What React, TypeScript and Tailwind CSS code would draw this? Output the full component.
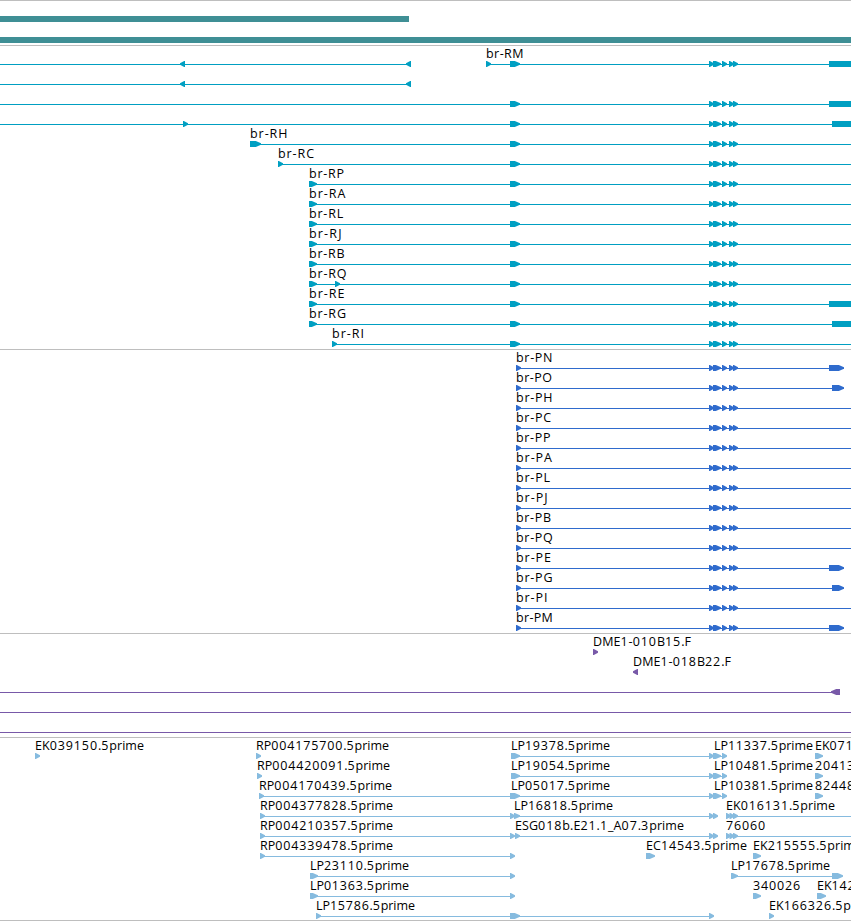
import { Fragment } from "react";

type Glyph = {
  x: number;
  end: number;
  shape?: "left" | "box";
};

type Feature = {
  label?: string;
  labelWidth?: number;
  labelX?: number;
  // start and end of the intron line
  line?: [number, number];
  glyphs: Glyph[];
};

type Row = Feature[];

const VIEW_END = 851;
const HEAD = 6;

const exon = (x: number, end: number): Glyph => ({ x, end });
const tick = (x: number): Glyph => ({ x, end: x + 5 });
const back = (x: number, end: number): Glyph => ({ x, end, shape: "left" });
const box = (x: number): Glyph => ({ x, end: VIEW_END, shape: "box" });

const smallExons = [tick(709), exon(713, 721), tick(722), tick(729), tick(733)];
const sharedExons = [exon(510, 520), ...smallExons];

function transcript(
  label: string,
  labelWidth: number,
  start: number,
  first: Glyph[],
  last: Glyph[] = [],
): Row {
  return [
    {
      label,
      labelWidth,
      line: [start, VIEW_END],
      glyphs: [...first, ...sharedExons, ...last],
    },
  ];
}

function protein(label: string, labelWidth: number, lastExon?: number): Row {
  return [
    {
      label,
      labelWidth,
      line: [516, lastExon ? 844 : VIEW_END],
      glyphs: [
        tick(516),
        ...smallExons,
        ...(lastExon ? [exon(lastExon, 844)] : []),
      ],
    },
  ];
}

const reverse: Feature = {
  line: [0, 410],
  glyphs: [back(180, 185), back(406, 411)],
};

const transcripts: Row[] = [
  [reverse, ...transcript("br-RM", 37.5, 486, [tick(486)], [box(829)])],
  [reverse],
  [{ line: [0, VIEW_END], glyphs: [...sharedExons, box(829)] }],
  [{ line: [0, VIEW_END], glyphs: [tick(183), ...sharedExons, box(832)] }],
  transcript("br-RH", 37.5, 250, [exon(250, 261)]),
  transcript("br-RC", 36, 278, [tick(278)]),
  transcript("br-RP", 35, 309, [exon(309, 317)]),
  transcript("br-RA", 36.5, 309, [exon(309, 317)]),
  transcript("br-RL", 34.2, 309, [exon(309, 317)]),
  transcript("br-RJ", 32.5, 309, [exon(309, 317)]),
  transcript("br-RB", 35.5, 309, [exon(309, 317)]),
  transcript("br-RQ", 37.5, 309, [exon(309, 317), tick(335)]),
  transcript("br-RE", 35.5, 309, [exon(309, 317)], [box(829)]),
  transcript("br-RG", 37, 309, [exon(309, 317)], [box(832)]),
  transcript("br-RI", 32, 332, [tick(332)]),
];

const proteins: Row[] = [
  protein("br-PN", 36.5, 829),
  protein("br-PO", 36, 832),
  protein("br-PH", 36.5),
  protein("br-PC", 35),
  protein("br-PP", 34.5),
  protein("br-PA", 36),
  protein("br-PL", 34),
  protein("br-PJ", 31.5),
  protein("br-PB", 35),
  protein("br-PQ", 36.8),
  protein("br-PE", 35, 829),
  protein("br-PG", 36.5, 832),
  protein("br-PI", 31.5),
  protein("br-PM", 36.8, 829),
];

const ends: Row[] = [
  [{ label: "DME1-010B15.F", labelWidth: 98, glyphs: [tick(593)] }],
  [{ label: "DME1-018B22.F", labelWidth: 98, glyphs: [back(633, 638)] }],
  [{ line: [0, 840], glyphs: [back(831, 840)] }],
  [{ line: [0, VIEW_END], glyphs: [] }],
  [{ line: [0, VIEW_END], glyphs: [] }],
];

const cloneTail = (label: string, text: string): Row => [
  {
    label,
    labelX: 714,
    labelWidth: 99,
    glyphs: [exon(713, 721), tick(722)],
  },
  { label: text, glyphs: [exon(815, 823)] },
];

const clones: Row[] = [
  [
    { label: "EK039150.5prime", labelWidth: 109, glyphs: [tick(35)] },
    { label: "RP004175700.5prime", labelWidth: 133, glyphs: [tick(256)] },
    {
      label: "LP19378.5prime",
      labelWidth: 99,
      line: [511, 726],
      glyphs: [exon(511, 520), tick(709)],
    },
    ...cloneTail("LP11337.5prime", "EK071"),
  ],
  [
    { label: "RP004420091.5prime", labelWidth: 133, glyphs: [tick(257)] },
    {
      label: "LP19054.5prime",
      labelWidth: 99,
      line: [511, 726],
      glyphs: [exon(511, 520), tick(709)],
    },
    ...cloneTail("LP10481.5prime", "20413"),
  ],
  [
    {
      label: "RP004170439.5prime",
      labelWidth: 133,
      line: [259, 511],
      glyphs: [tick(259)],
    },
    {
      label: "LP05017.5prime",
      labelX: 511,
      labelWidth: 99,
      line: [511, 726],
      glyphs: [exon(510, 520), tick(709)],
    },
    ...cloneTail("LP10381.5prime", "82448"),
  ],
  [
    {
      label: "RP004377828.5prime",
      labelWidth: 133,
      line: [260, 514],
      glyphs: [tick(260), tick(510)],
    },
    {
      label: "LP16818.5prime",
      labelWidth: 99,
      line: [514, 717],
      glyphs: [exon(514, 520), tick(709), tick(713)],
    },
    {
      label: "EK016131.5prime",
      labelWidth: 109,
      line: [726, VIEW_END],
      glyphs: [tick(726), tick(729.5), tick(733)],
    },
  ],
  [
    {
      label: "RP004210357.5prime",
      labelWidth: 133,
      line: [260, 514],
      glyphs: [tick(260), tick(510)],
    },
    {
      label: "ESG018b.E21.1_A07.3prime",
      labelWidth: 169,
      line: [515, 717],
      glyphs: [tick(515), tick(709), tick(713)],
    },
    {
      label: "76060",
      line: [726, VIEW_END],
      glyphs: [tick(726), tick(729.5), tick(733)],
    },
  ],
  [
    {
      label: "RP004339478.5prime",
      labelWidth: 133,
      line: [260, 514],
      glyphs: [tick(260), tick(510)],
    },
    { label: "EC14543.5prime", labelWidth: 101, glyphs: [exon(646, 655)] },
    { label: "EK215555.5prime", labelWidth: 109, glyphs: [exon(753, 761)] },
  ],
  [
    {
      label: "LP23110.5prime",
      labelWidth: 99,
      line: [310, 514],
      glyphs: [exon(310, 318), tick(510)],
    },
    {
      label: "LP17678.5prime",
      labelWidth: 99,
      line: [731, 842],
      glyphs: [exon(731, 738), exon(832, 843)],
    },
  ],
  [
    {
      label: "LP01363.5prime",
      labelWidth: 99,
      line: [310, 514],
      glyphs: [exon(310, 318), tick(510)],
    },
    { label: "340026", glyphs: [exon(753, 761)] },
    { label: "EK142", glyphs: [exon(817, 826)] },
  ],
  [
    {
      label: "LP15786.5prime",
      labelWidth: 99,
      line: [316, 713],
      glyphs: [tick(316), exon(510, 520), tick(709)],
    },
    { label: "EK166326.5prime", labelWidth: 109, glyphs: [tick(769)] },
  ],
];

function outline({ x, end, shape }: Glyph) {
  if (shape === "box") {
    return `${x},15 ${end},15 ${end},21 ${x},21`;
  }
  const head = Math.min(HEAD, end - x);
  if (shape === "left") {
    const neck = x + head;
    return `${end},15 ${neck - 0.8},15 ${x},17.3 ${x},18.7 ${neck - 0.8},21 ${end},21`;
  }
  const neck = end - head;
  return `${x},15 ${neck + 0.8},15 ${end},17.3 ${end},18.7 ${neck + 0.8},21 ${x},21`;
}

// digits are set a little wider than letters
function Label({ text }: { text: string }) {
  return text.split(/(\d+)/).map((part, i) =>
    /\d/.test(part) ? (
      <tspan key={i} className="tracking-[0.85px]">
        {part}
      </tspan>
    ) : (
      part
    ),
  );
}

function FeatureRow({ row }: { row: Row }) {
  return (
    <svg className="block h-5 w-full overflow-visible" fill="currentColor">
      {row.map((feature, index) => (
        <Fragment key={index}>
          {feature.line && (
            <rect
              x={feature.line[0]}
              y={18}
              width={feature.line[1] - feature.line[0]}
              height={1}
            />
          )}
          {feature.glyphs.map((glyph, i) => (
            <polygon key={i} points={outline(glyph)} />
          ))}
          {feature.label && (
            <text
              x={feature.labelX ?? feature.glyphs[0].x}
              y={12}
              textLength={feature.labelWidth}
              className="fill-black"
            >
              <Label text={feature.label} />
            </text>
          )}
        </Fragment>
      ))}
    </svg>
  );
}

function Track({ rows, className }: { rows: Row[]; className: string }) {
  return (
    <section className={`border-b border-[#bebebe] ${className}`}>
      {rows.map((row, index) => (
        <FeatureRow key={index} row={row} />
      ))}
    </section>
  );
}

export default function App() {
  return (
    <main className="h-[921px] w-[851px] overflow-hidden bg-white font-['Open_Sans',sans-serif] text-[12.5px]">
      {/* gene spans */}
      <section className="flex h-[46px] flex-col gap-[15px] border-y border-[#bebebe] pt-[15px]">
        <div className="h-1.5 w-[409px] bg-[#3f8f95]" />
        <div className="h-1.5 w-full bg-[#3f8f95]" />
      </section>
      <Track rows={transcripts} className="pb-[3px] text-[#009fc2]" />
      <Track rows={proteins} className="pb-[3px] text-[#2f6bcd]" />
      <Track rows={ends} className="pb-[3px] text-[#7859a8]" />
      <Track rows={clones} className="pb-0.5 text-[#86bbdf]" />
    </main>
  );
}
